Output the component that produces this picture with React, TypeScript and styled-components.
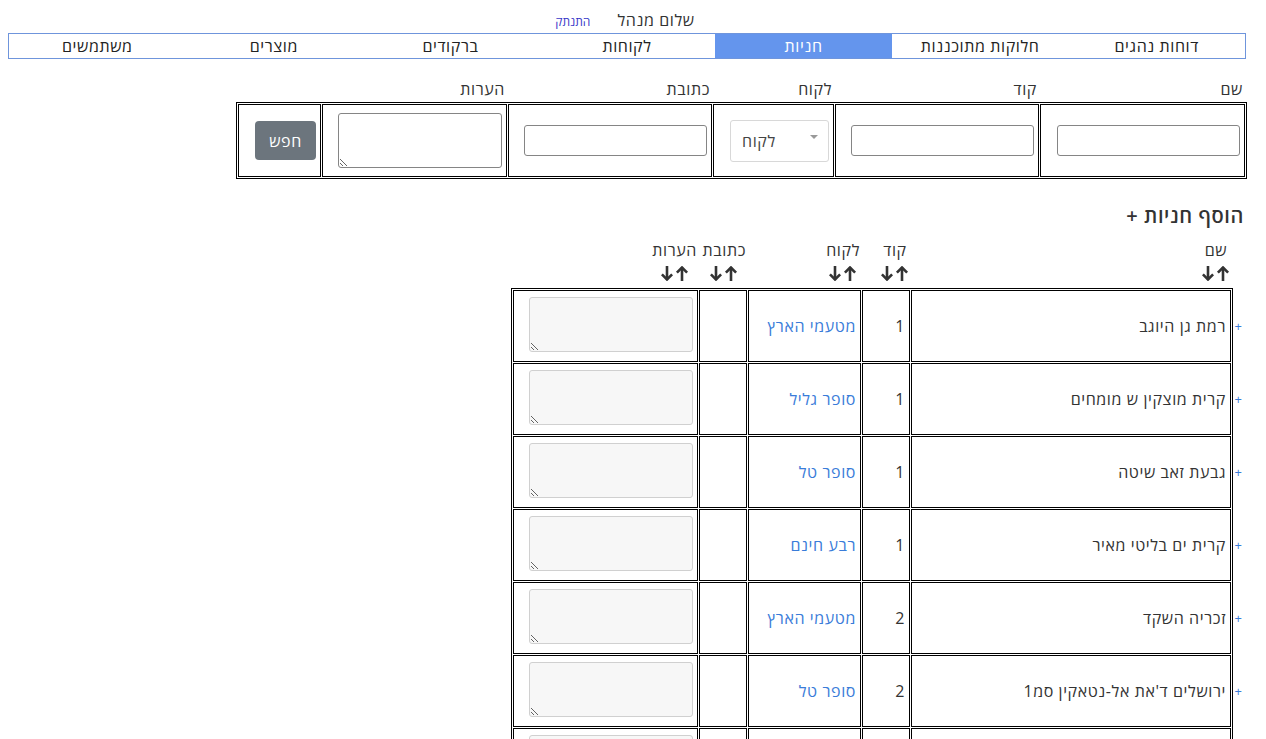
import React from 'react'
import styled, { createGlobalStyle } from 'styled-components'

const GlobalStyle = createGlobalStyle`
  * { box-sizing: border-box; }
  body {
    margin: 8px;
    background: #fff;
    color: #333;
    font-family: 'Open Sans', 'Liberation Sans', 'DejaVu Sans', sans-serif;
    font-size: 16px;
    letter-spacing: 0.6px;
  }
`

const navItems = ['דוחות נהגים', 'חלוקות מתוכננות', 'חניות', 'לקוחות', 'ברקודים', 'מוצרים', 'משתמשים']

const searchCols = '205px 204px 121px 204px 185px 83px'
const resultCols = '320px 48px 113px 48px 185px'

const rows = [
  { name: 'רמת גן היוגב', code: '1', customer: 'מטעמי הארץ' },
  { name: 'קרית מוצקין ש מומחים', code: '1', customer: 'סופר גליל' },
  { name: 'גבעת זאב שיטה', code: '1', customer: 'סופר טל' },
  { name: 'קרית ים בליטי מאיר', code: '1', customer: 'רבע חינם' },
  { name: 'זכריה השקד', code: '2', customer: 'מטעמי הארץ' },
  { name: "ירושלים ד'את אל-נטאקין סמ1", code: '2', customer: 'סופר טל' },
  { name: 'חיפה נווה שאנן', code: '2', customer: 'רבע חינם' },
]

const SortArrows = () => (
  <svg width="28" height="15" viewBox="0 0 28 15" fill="none" stroke="#333" strokeWidth="2.6">
    <path d="M6 0V13.5" />
    <path d="M0.9 8.4L6 13.5L11.1 8.4" />
    <path d="M21 1.5V15" />
    <path d="M15.9 6.6L21 1.5L26.1 6.6" />
  </svg>
)

export default function App() {
  return (
    <Page dir="rtl">
      <GlobalStyle />
      <Greeting>
        <span>שלום מנהל</span>
        <LogoutLink>התנתק</LogoutLink>
      </Greeting>

      <Nav>
        {navItems.map((item) => (
          <NavItem key={item} $active={item === 'חניות'}>{item}</NavItem>
        ))}
      </Nav>

      <SearchLabels>
        {['שם', 'קוד', 'לקוח', 'כתובת', 'הערות', ''].map((l, i) => (
          <Label key={i}>{l}</Label>
        ))}
      </SearchLabels>
      <SearchTable>
        <SearchCell><TextInput /></SearchCell>
        <SearchCell><TextInput /></SearchCell>
        <SearchCell>
          <FakeSelect>
            <span>לקוח</span>
            <Caret />
          </FakeSelect>
        </SearchCell>
        <SearchCell><TextInput /></SearchCell>
        <SearchCell><SearchArea /></SearchCell>
        <SearchCell><SearchButton>חפש</SearchButton></SearchCell>
      </SearchTable>

      <AddTitle>הוסף חניות +</AddTitle>

      <ResultsHead>
        {['שם', 'קוד', 'לקוח', 'כתובת', 'הערות'].map((l) => (
          <HeadCell key={l}>
            <SortBlock>
              <span>{l}</span>
              <SortArrows />
            </SortBlock>
          </HeadCell>
        ))}
      </ResultsHead>

      <ResultsTable>
        {rows.map((r, i) => (
          <React.Fragment key={i}>
            <NameCell>
              {r.name}
              <Expand>+</Expand>
            </NameCell>
            <Cell>{r.code}</Cell>
            <Cell><CustomerLink>{r.customer}</CustomerLink></Cell>
            <Cell />
            <Cell><NotesArea readOnly /></Cell>
          </React.Fragment>
        ))}
      </ResultsTable>
    </Page>
  )
}

const Page = styled.div`
  display: flex;
  flex-direction: column;
`

const Greeting = styled.div`
  display: flex;
  justify-content: center;
  align-items: baseline;
  gap: 27px;
  margin-top: 2px;
  height: 20px;
  line-height: 20px;
  padding-right: 16px;
`

const LogoutLink = styled.a`
  font-size: 12px;
  letter-spacing: 0;
  color: #3838c8;
  cursor: pointer;
`

const Nav = styled.div`
  display: grid;
  grid-template-columns: repeat(7, 1fr);
  width: 1238px;
  margin-top: 3px;
  margin-right: auto;
  border: 1px solid #6f95dc;
`

const NavItem = styled.div<{ $active?: boolean }>`
  height: 24px;
  line-height: 24px;
  text-align: center;
  color: ${({ $active }) => ($active ? '#fff' : '#222')};
  background: ${({ $active }) => ($active ? '#6495ed' : 'transparent')};
`

const SearchLabels = styled.div`
  display: grid;
  grid-template-columns: ${searchCols};
  column-gap: 1px;
  width: 1011px;
  padding: 0 2px;
  margin: 20px 11px 3px 0;
  line-height: 20px;
`

const Label = styled.div`
  padding-right: 2px;
  color: #333;
`

const SearchTable = styled.div`
  display: grid;
  grid-template-columns: ${searchCols};
  gap: 1px;
  padding: 1px;
  width: 1011px;
  margin-right: 11px;
  border: 1px solid #000;
`

const SearchCell = styled.div`
  height: 73px;
  border: 1px solid #000;
  display: flex;
  align-items: center;
  padding-right: 4px;
`

const TextInput = styled.input`
  width: 183px;
  height: 31px;
  border: 1px solid #858585;
  border-radius: 3px;
  background: #fff;
  font: inherit;
`

const SearchArea = styled.textarea`
  width: 164px;
  height: 55px;
  border: 1px solid #858585;
  border-radius: 3px;
  background: #fff;
  font: inherit;
`

const FakeSelect = styled.div`
  direction: ltr;
  width: 99px;
  height: 42px;
  border: 1px solid #d8d8d8;
  border-radius: 3px;
  display: flex;
  align-items: center;
  justify-content: space-between;
  padding: 0 10px 0 11px;
  color: #444;
`

const Caret = styled.span`
  width: 0;
  height: 0;
  margin-top: -8px;
  border-left: 4px solid transparent;
  border-right: 4px solid transparent;
  border-top: 4px solid #999;
`

const SearchButton = styled.button`
  width: 61px;
  height: 39px;
  border: none;
  border-radius: 4px;
  background: #6c757d;
  color: #fff;
  font: inherit;
  letter-spacing: inherit;
`

const AddTitle = styled.div`
  margin: 25px 14px 0 0;
  font-size: 20px;
  font-weight: 600;
  line-height: 24px;
  color: #333;
`

const ResultsHead = styled.div`
  display: grid;
  grid-template-columns: ${resultCols};
  column-gap: 1px;
  width: 722px;
  padding: 0 2px;
  margin: 12px 25px 0 0;
`

const HeadCell = styled.div`
  display: flex;
  padding-right: 1px;
`

const SortBlock = styled.div`
  display: inline-flex;
  flex-direction: column;
  align-items: center;
  line-height: 20px;
  gap: 6px;
`

const ResultsTable = styled.div`
  display: grid;
  grid-template-columns: ${resultCols};
  gap: 1px;
  padding: 1px;
  width: 722px;
  margin: 7px 25px 0 0;
  border: 1px solid #000;
`

const Cell = styled.div`
  height: 72px;
  border: 1px solid #000;
  display: flex;
  align-items: center;
  padding-right: 4px;
  color: #333;
`

const NameCell = styled(Cell)`
  position: relative;
`

const Expand = styled.span`
  position: absolute;
  right: -12px;
  font-size: 13px;
  letter-spacing: 0;
  color: #3b7dd8;
`

const CustomerLink = styled.a`
  color: #3a7cd9;
  cursor: pointer;
`

const NotesArea = styled.textarea`
  width: 164px;
  height: 55px;
  margin-top: -4px;
  border: 1px solid #d0d0d0;
  border-radius: 3px;
  background: #f7f7f7;
  font: inherit;
`
